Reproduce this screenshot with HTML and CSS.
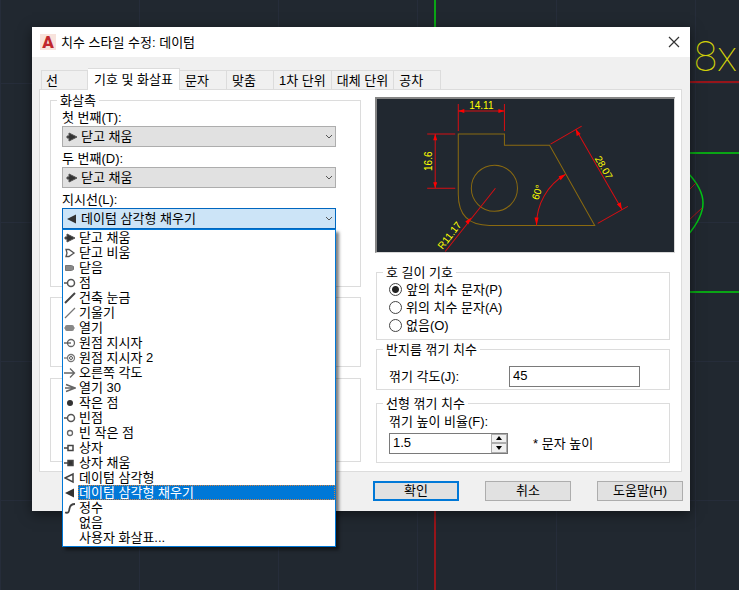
FILE: index.html
```
<!DOCTYPE html>
<html lang="ko">

<head>
    <meta charset="UTF-8">
    <meta name="viewport" content="width=device-width, initial-scale=1.0">
    <title>치수 스타일 수정: 데이텀</title>
    <link rel="stylesheet" href="styles.css">
</head>

<body>
    <!-- arrowhead icons -->
    <svg class="sprite">
        <symbol id="i-closed-filled" viewBox="0 0 12 12"><path d="M1 5h2V2l8 4-8 4V7H1z" fill="#333" stroke="#555"/></symbol>
        <symbol id="i-closed-blank" viewBox="0 0 12 12"><path d="M2 2.500h3L10 6 5 9.500H2l1-3.500z" fill="none" stroke="#555" stroke-width="1.300"/></symbol>
        <symbol id="i-closed" viewBox="0 0 12 12"><path d="M1.500 3.500h6l2 1v3l-2 1h-6z" fill="#888" stroke="#777"/></symbol>
        <symbol id="i-dot" viewBox="0 0 12 12"><circle cx="7" cy="6" r="3.500" fill="none" stroke="#555" stroke-width="1.500"/><path d="M0 6h3.500" stroke="#555" stroke-width="1.500"/></symbol>
        <symbol id="i-arch" viewBox="0 0 12 12"><path d="M1 11L11 1" stroke="#444" stroke-width="2"/></symbol>
        <symbol id="i-oblique" viewBox="0 0 12 12"><path d="M1 11L11 1" stroke="#777" stroke-width="1.300"/></symbol>
        <symbol id="i-open" viewBox="0 0 12 12"><rect x="1.500" y="3.500" width="8" height="5" rx="1" fill="#888" stroke="#888"/><path d="M0 6h11" stroke="#888"/></symbol>
        <symbol id="i-origin" viewBox="0 0 12 12"><circle cx="7" cy="6" r="3.500" fill="none" stroke="#666" stroke-width="1.300"/><path d="M0 6h7" stroke="#555" stroke-width="1.300"/></symbol>
        <symbol id="i-origin2" viewBox="0 0 12 12"><circle cx="7" cy="6" r="3.500" fill="none" stroke="#777" stroke-width="1.300"/><circle cx="7" cy="6" r="1.500" fill="none" stroke="#555"/><path d="M0 6h3" stroke="#555"/></symbol>
        <symbol id="i-right" viewBox="0 0 12 12"><path d="M0 6h10M6 1.500L10.500 6 6 10.500" fill="none" stroke="#666" stroke-width="1.300"/></symbol>
        <symbol id="i-open30" viewBox="0 0 12 12"><path d="M1 6h9M2 2.500L11 6 2 9.500" fill="none" stroke="#666" stroke-width="1.500"/></symbol>
        <symbol id="i-dotsmall" viewBox="0 0 12 12"><circle cx="6" cy="6" r="3" fill="#333"/></symbol>
        <symbol id="i-smallblank" viewBox="0 0 12 12"><circle cx="6" cy="6" r="2.500" fill="none" stroke="#666" stroke-width="1.300"/></symbol>
        <symbol id="i-box" viewBox="0 0 12 12"><path d="M0 6h4M4 3.500h5v5H4z" fill="none" stroke="#444" stroke-width="1.500"/></symbol>
        <symbol id="i-boxfilled" viewBox="0 0 12 12"><path d="M0 6h4M4 3.500h5v5H4z" fill="#333" stroke="#444" stroke-width="1.500"/></symbol>
        <symbol id="i-datum" viewBox="0 0 12 12"><path d="M1 6l8-4v8z" fill="none" stroke="#444" stroke-width="1.500"/></symbol>
        <symbol id="i-datumfilled" viewBox="0 0 12 12"><path d="M1 6l9-4.500v9z" fill="#333"/></symbol>
        <symbol id="i-integral" viewBox="0 0 12 12"><path d="M1 10.500c4 1 4-1 4.500-4S8 2 11 2" fill="none" stroke="#444" stroke-width="1.800"/></symbol>
    </svg>

    <div class="drawing">
        <svg class="drawing-lines">
            <path d="M435 0V40" stroke="#0aa515" stroke-width="2"/>
            <path d="M435 500V1200" stroke="#97151a" stroke-width="2"/>
            <path d="M680 82H2000" stroke="#97151a" stroke-width="2"/>
            <path d="M680 153H2000M680 292H2000" stroke="#0aa515" stroke-width="2"/>
            <path d="M688 173Q703 189 703 203T688 235" fill="none" stroke="#00c814" stroke-width="1.500"/>
            <path d="M688 191L696 183M688 221L702 208" stroke="#b0141a"/>
            <text class="drawing-text" x="694" y="71">8x</text>
        </svg>

        <div class="dialog" role="dialog" aria-labelledby="dialog-title">
            <div class="titlebar">
                <span class="logo">A</span>
                <span id="dialog-title">치수 스타일 수정: 데이텀</span>
                <button class="close" type="button" aria-label="닫기">
                    <svg viewBox="0 0 12 12"><path d="M1 1l10 10M11 1L1 11" stroke="#333" stroke-width="1.200"/></svg>
                </button>
            </div>

            <div class="tabs" role="tablist">
                <button type="button" role="tab">선</button>
                <button type="button" role="tab" class="active" aria-selected="true">기호 및 화살표</button>
                <button type="button" role="tab">문자</button>
                <button type="button" role="tab">맞춤</button>
                <button type="button" role="tab">1차 단위</button>
                <button type="button" role="tab">대체 단위</button>
                <button type="button" role="tab">공차</button>
            </div>

            <div class="panel" role="tabpanel">
                <div class="left">
                    <fieldset class="arrowheads">
                        <legend>화살촉</legend>
                        <div class="field">
                            <label for="first">첫 번째(T):</label>
                            <div class="combo">
                                <select id="first"><option>닫고 채움</option></select>
                                <svg class="icon"><use href="#i-closed-filled"/></svg>
                                <svg class="chevron" viewBox="0 0 8 6"><path d="M1 1l3 3 3-3"/></svg>
                            </div>
                        </div>
                        <div class="field">
                            <label for="second">두 번째(D):</label>
                            <div class="combo">
                                <select id="second"><option>닫고 채움</option></select>
                                <svg class="icon"><use href="#i-closed-filled"/></svg>
                                <svg class="chevron" viewBox="0 0 8 6"><path d="M1 1l3 3 3-3"/></svg>
                            </div>
                        </div>
                        <div class="field">
                            <label for="leader">지시선(L):</label>
                            <div class="combo open">
                                <select id="leader"><option>데이텀 삼각형 채우기</option></select>
                                <svg class="icon"><use href="#i-datumfilled"/></svg>
                                <svg class="chevron" viewBox="0 0 8 6"><path d="M1 1l3 3 3-3"/></svg>
                                <ul class="dropdown" role="listbox" aria-label="지시선">
                                    <li role="option"><svg class="icon"><use href="#i-closed-filled"/></svg><span>닫고 채움</span></li>
                                    <li role="option"><svg class="icon"><use href="#i-closed-blank"/></svg><span>닫고 비움</span></li>
                                    <li role="option"><svg class="icon"><use href="#i-closed"/></svg><span>닫음</span></li>
                                    <li role="option"><svg class="icon"><use href="#i-dot"/></svg><span>점</span></li>
                                    <li role="option"><svg class="icon"><use href="#i-arch"/></svg><span>건축 눈금</span></li>
                                    <li role="option"><svg class="icon"><use href="#i-oblique"/></svg><span>기울기</span></li>
                                    <li role="option"><svg class="icon"><use href="#i-open"/></svg><span>열기</span></li>
                                    <li role="option"><svg class="icon"><use href="#i-origin"/></svg><span>원점 지시자</span></li>
                                    <li role="option"><svg class="icon"><use href="#i-origin2"/></svg><span>원점 지시자 2</span></li>
                                    <li role="option"><svg class="icon"><use href="#i-right"/></svg><span>오른쪽 각도</span></li>
                                    <li role="option"><svg class="icon"><use href="#i-open30"/></svg><span>열기 30</span></li>
                                    <li role="option"><svg class="icon"><use href="#i-dotsmall"/></svg><span>작은 점</span></li>
                                    <li role="option"><svg class="icon"><use href="#i-dot"/></svg><span>빈점</span></li>
                                    <li role="option"><svg class="icon"><use href="#i-smallblank"/></svg><span>빈 작은 점</span></li>
                                    <li role="option"><svg class="icon"><use href="#i-box"/></svg><span>상자</span></li>
                                    <li role="option"><svg class="icon"><use href="#i-boxfilled"/></svg><span>상자 채움</span></li>
                                    <li role="option"><svg class="icon"><use href="#i-datum"/></svg><span>데이텀 삼각형</span></li>
                                    <li role="option" class="selected" aria-selected="true"><svg class="icon"><use href="#i-datumfilled"/></svg><span>데이텀 삼각형 채우기</span></li>
                                    <li role="option"><svg class="icon"><use href="#i-integral"/></svg><span>정수</span></li>
                                    <li role="option"><svg class="icon"></svg><span>없음</span></li>
                                    <li role="option"><svg class="icon"></svg><span>사용자 화살표...</span></li>
                                </ul>
                            </div>
                        </div>
                    </fieldset>
                    <fieldset class="center-marks"></fieldset>
                    <fieldset class="breaks"></fieldset>
                </div>

                <div class="right">
                    <svg class="preview" viewBox="0 0 296 152">
                        <g class="outline">
                            <path d="M81 95V35h46v11h45l45 80H112Q81 126 81 95z"/>
                            <circle cx="117" cy="89" r="23"/>
                        </g>
                        <g class="dims">
                            <path d="M81 5v27M127 5v27M81 12h46"/>
                            <path d="M50 35h28M50 89h28M58 35v54"/>
                            <path d="M173 45l31-18M220 124l30-17M198 30l46 80"/>
                            <path d="M159 126A58 58 0 0 1 188 75"/>
                            <path d="M118 89L68 152"/>
                        </g>
                        <g class="heads">
                            <path d="M81 12l6-2v4zM127 12l-6-2v4z"/>
                            <path d="M58 35l-2 6h4zM58 89l-2-6h4z"/>
                            <path d="M198 30l1 7 4-2zM244 110l-5-5 4-2z"/>
                            <path d="M159 126l-2-8h4zM188 75l-7 2 2 4z"/>
                            <path d="M94 118l-6 4 3 3z"/>
                        </g>
                        <g class="values">
                            <text x="104" y="10">14.11</text>
                            <text transform="translate(55 62) rotate(-90)">16.6</text>
                            <text transform="translate(223 70) rotate(60)">28.07</text>
                            <text transform="translate(163 94) rotate(-72)">60°</text>
                            <text transform="translate(75 138) rotate(-52)">R11.17</text>
                        </g>
                    </svg>

                    <fieldset class="arc">
                        <legend>호 길이 기호</legend>
                        <label><input type="radio" name="arc" checked>앞의 치수 문자(P)</label>
                        <label><input type="radio" name="arc">위의 치수 문자(A)</label>
                        <label><input type="radio" name="arc">없음(O)</label>
                    </fieldset>

                    <fieldset class="radius">
                        <legend>반지름 꺾기 치수</legend>
                        <div class="row">
                            <label for="angle">꺾기 각도(J):</label>
                            <input type="text" id="angle" value="45">
                        </div>
                    </fieldset>

                    <fieldset class="linear">
                        <legend>선형 꺾기 치수</legend>
                        <label for="factor">꺾기 높이 비율(F):</label>
                        <div class="row">
                            <div class="spinner">
                                <input type="text" id="factor" value="1.5">
                                <div class="spin-buttons">
                                    <button type="button" aria-label="증가"><svg viewBox="0 0 6 4"><path d="M0 4l3-4 3 4z"/></svg></button>
                                    <button type="button" aria-label="감소"><svg viewBox="0 0 6 4"><path d="M0 0h6L3 4z"/></svg></button>
                                </div>
                            </div>
                            <span>* 문자 높이</span>
                        </div>
                    </fieldset>
                </div>
            </div>

            <div class="footer">
                <button type="button" class="default">확인</button>
                <button type="button">취소</button>
                <button type="button">도움말(H)</button>
            </div>
        </div>
    </div>
</body>

</html>
```
FILE: styles.css
```
* {
    box-sizing: border-box;
}

body {
    margin: 0;
    font-family: "Liberation Sans", "Noto Sans CJK KR", sans-serif;
    font-size: 13px;
    line-height: 15px;
    color: #000;
    background-color: #212830;
}

button,
input,
select {
    font: inherit;
    color: inherit;
    margin: 0;
    border-radius: 0;
}

.sprite {
    position: absolute;
    width: 0;
    height: 0;
}

/* drawing area behind the dialog */
.drawing {
    position: relative;
    min-height: 100vh;
    padding: 27px 49px 80px 32px;
    overflow: hidden;
    background-image: linear-gradient(#262d3a 1px, transparent 1px), linear-gradient(90deg, #262d3a 1px, transparent 1px);
    background-size: 139px 139px;
    background-position: 0 83px;
}

.drawing-lines {
    position: absolute;
    left: 0;
    top: 0;
    width: 100%;
    height: 100%;
}

.drawing-text {
    font-family: Roboto, sans-serif;
    font-weight: 100;
    font-size: 42px;
    fill: #d2d20a;
}

.dialog {
    position: relative;
    background-color: #f0f0f0;
    box-shadow: 0 3px 12px rgba(0, 0, 0, 0.5);
}

.titlebar {
    display: flex;
    align-items: center;
    height: 30px;
    padding: 0 8px;
    background-color: #fff;
}

.logo {
    width: 16px;
    margin-right: 5px;
    text-align: center;
    font-family: Roboto, sans-serif;
    font-weight: 900;
    font-size: 17px;
    line-height: 16px;
    color: #c1272d;
    background-color: #f8e3dc;
}

.close {
    margin-left: auto;
    padding: 0;
    border: none;
    background: none;
    width: 14px;
    height: 14px;
}

.close svg {
    display: block;
    width: 12px;
    height: 12px;
}

/* tabs */
.tabs {
    display: flex;
    align-items: flex-end;
    height: 32px;
    padding-left: 9px;
}

.tabs button {
    min-width: 47px;
    height: 19px;
    padding: 0 5px 0 4px;
    text-align: left;
    white-space: nowrap;
    background-color: #f0f0f0;
    border: 1px solid #dcdcdc;
    border-width: 1px 1px 0 0;
}

.tabs button:first-child {
    border-left-width: 1px;
}

.tabs .active {
    position: relative;
    height: 22px;
    margin-bottom: -1px;
    padding: 0 6px;
    background-color: #fff;
}

.tabs .active ~ button {
    padding: 0 5px;
}

.panel {
    display: grid;
    grid-template-columns: 311fr 300fr;
    gap: 14px;
    margin: 0 8px 0 7px;
    padding: 3px 6px 8px 10px;
    background-color: #fff;
    border: 1px solid #dcdcdc;
}

.left,
.right {
    display: flex;
    flex-direction: column;
    min-width: 0;
}

.left {
    gap: 3px;
}

fieldset {
    min-width: 0;
    margin: 0;
    padding: 0 0 0 12px;
    border: 1px solid #dcdcdc;
}

legend {
    margin-left: -6px;
    padding: 0 3px;
}

label {
    white-space: nowrap;
}

.arrowheads {
    flex: 195;
    padding: 2px 24px 0 11px;
}

.arrowheads legend {
    margin-left: -5px;
}

.center-marks {
    flex: 70;
    margin-top: 7px;
}

.breaks {
    flex: 85;
    margin-top: 8px;
}

.field {
    margin-bottom: 4px;
}

.field label {
    display: block;
    line-height: 16px;
}

.combo {
    position: relative;
}

.combo select {
    display: block;
    width: 100%;
    height: 21px;
    padding: 0 18px;
    appearance: none;
    background-color: #e1e1e1;
    border: 1px solid #adadad;
}

.combo.open select {
    background-color: #cce4f7;
    border-color: #0067c0;
}

.icon {
    width: 12px;
    height: 12px;
    flex: none;
}

.combo > .icon {
    position: absolute;
    left: 4px;
    top: 5px;
}

.chevron {
    position: absolute;
    right: 3px;
    top: 8px;
    width: 8px;
    height: 6px;
    fill: none;
    stroke: #555;
}

.dropdown {
    position: absolute;
    z-index: 1;
    top: 100%;
    left: 0;
    right: 0;
    margin: 0;
    padding: 0 0 1px;
    list-style: none;
    background-color: #fff;
    border: 1px solid #0078d7;
    box-shadow: 3px 3px 3px rgba(0, 0, 0, 0.5);
}

.dropdown li {
    display: flex;
    align-items: center;
    gap: 2px;
    height: 15px;
    padding-left: 1px;
}

.dropdown span {
    flex: 1;
    padding-left: 1px;
}

.dropdown .selected span {
    color: #fff;
    background-color: #0078d7;
    outline: 1px dotted #d08040;
    outline-offset: -1px;
}

/* right column */
.preview {
    display: block;
    width: 100%;
    margin-top: 4px;
    background-color: #212830;
    border: 1px solid #d8d8d8;
    border-top: 2px solid #858585;
    border-left: 2px solid #858585;
}

.outline {
    fill: none;
    stroke: #8a6a10;
}

.dims {
    fill: none;
    stroke: #d80e12;
}

.heads {
    fill: #ff0000;
}

.values {
    font-family: "Liberation Sans", sans-serif;
    font-size: 10px;
    text-anchor: middle;
    fill: #ffff00;
}

.right fieldset {
    margin: 0 5px 0 1px;
}

.right .arc {
    margin-top: 12px;
    padding-top: 1px;
    padding-bottom: 4px;
}

.arc label {
    display: flex;
    align-items: center;
    gap: 4px;
    height: 18px;
}

.arc input {
    appearance: none;
    width: 13px;
    height: 13px;
    border: 1px solid #444;
    border-radius: 50%;
    background-color: #fff;
}

.arc input:checked {
    background-image: radial-gradient(circle, #222 3px, transparent 4px);
}

.right .radius {
    margin-top: 2px;
    padding-top: 9px;
    padding-bottom: 2px;
}

.row {
    display: flex;
    align-items: center;
}

.radius label {
    width: 120px;
}

input[type="text"] {
    width: 131px;
    height: 21px;
    padding: 0 3px 2px;
    background-color: #fff;
    border: 1px solid #7a7a7a;
}

.right .linear {
    margin-top: 6px;
    padding-top: 3px;
    padding-bottom: 8px;
}

.linear label {
    display: block;
    margin-bottom: 4px;
}

.spinner {
    display: flex;
    width: 119px;
    height: 21px;
    margin-right: 25px;
    border: 1px solid #7a7a7a;
}

.spinner input[type="text"] {
    flex: 1;
    min-width: 0;
    height: 19px;
    border: none;
}

.spin-buttons {
    display: flex;
    flex-direction: column;
    width: 16px;
}

.spin-buttons button {
    flex: 1;
    display: flex;
    align-items: center;
    justify-content: center;
    min-height: 0;
    padding: 0;
    background-color: #f0f0f0;
    border: 1px solid #adadad;
}

.spin-buttons svg {
    width: 6px;
    height: 4px;
}

.footer {
    display: flex;
    justify-content: flex-end;
    gap: 26px;
    padding: 9px 7px 10px;
}

.footer button {
    width: 86px;
    height: 20px;
    padding: 0;
    background-color: #e1e1e1;
    border: 1px solid #adadad;
}

.footer .default {
    border: 2px solid #0078d7;
}
```
